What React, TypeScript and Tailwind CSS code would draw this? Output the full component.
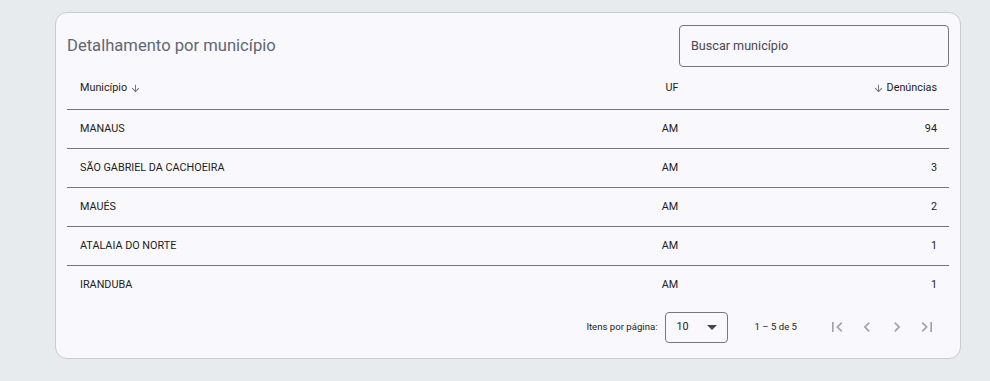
import React from "react";

type Row = { nome: string; uf: string; total: number };

const rows: Row[] = [
  { nome: "MANAUS", uf: "AM", total: 94 },
  { nome: "SÃO GABRIEL DA CACHOEIRA", uf: "AM", total: 3 },
  { nome: "MAUÉS", uf: "AM", total: 2 },
  { nome: "ATALAIA DO NORTE", uf: "AM", total: 1 },
  { nome: "IRANDUBA", uf: "AM", total: 1 },
];

function ArrowDown({ className = "" }: { className?: string }) {
  return (
    <svg viewBox="0 0 24 24" className={className} fill="currentColor">
      <path d="M20 12l-1.41-1.41L13 16.17V4h-2v12.17l-5.58-5.59L4 12l8 8 8-8z" />
    </svg>
  );
}

function FirstPage() {
  return (
    <svg viewBox="0 0 24 24" className="w-[20px] h-[20px]" fill="currentColor">
      <path d="M18.41 16.59L13.82 12l4.59-4.59L17 6l-6 6 6 6zM6 6h2v12H6z" />
    </svg>
  );
}
function PrevPage() {
  return (
    <svg viewBox="0 0 24 24" className="w-[20px] h-[20px]" fill="currentColor">
      <path d="M15.41 7.41L14 6l-6 6 6 6 1.41-1.41L10.83 12z" />
    </svg>
  );
}
function NextPage() {
  return (
    <svg viewBox="0 0 24 24" className="w-[20px] h-[20px]" fill="currentColor">
      <path d="M10 6L8.59 7.41 13.17 12l-4.58 4.59L10 18l6-6z" />
    </svg>
  );
}
function LastPage() {
  return (
    <svg viewBox="0 0 24 24" className="w-[20px] h-[20px]" fill="currentColor">
      <path d="M5.59 7.41L10.18 12l-4.59 4.59L7 18l6-6-6-6zM16 6h2v12h-2z" />
    </svg>
  );
}

export default function App() {
  return (
    <div
      className="w-[990px] h-[381px] bg-[#e8ebee] pt-[12px] pl-[55px]"
      style={{ fontFamily: "Roboto, 'Liberation Sans', sans-serif" }}
    >
      <div className="w-[906px] h-[347px] bg-[#f9f9fd] border border-[#c9cacf] rounded-[12px] px-[11px] pt-[12px]">
        {/* title + search */}
        <div className="flex items-center justify-between">
          <h2 className="text-[16.6px] text-[#5f6672] leading-[24px]">
            Detalhamento por município
          </h2>
          <div className="w-[270px] h-[42px] border border-[#79747e] rounded-[4px] flex items-center px-[11px]">
            <span className="text-[12.6px] text-[#49454f]">Buscar município</span>
          </div>
        </div>

        {/* table */}
        <div className="text-[10.8px] text-[#1d1b20]">
          <div className="grid grid-cols-[545px_120px_1fr] h-[43px] items-center border-b border-[#79747e]">
            <div className="pl-[13px] flex items-center gap-[3px]">
              <span>Município</span>
              <ArrowDown className="w-[11px] h-[11px] text-[#6b6b70]" />
            </div>
            <div className="text-center">UF</div>
            <div className="pr-[12px] flex items-center justify-end gap-[3px]">
              <ArrowDown className="w-[11px] h-[11px] text-[#6b6b70]" />
              <span>Denúncias</span>
            </div>
          </div>
          {rows.map((r, i) => (
            <div
              key={r.nome}
              className={
                "grid grid-cols-[545px_120px_1fr] h-[39px] items-center " +
                (i < rows.length - 1 ? "border-b border-[#79747e]" : "")
              }
            >
              <div className="pl-[13px]">{r.nome}</div>
              <div className="text-center pr-[4px]">{r.uf}</div>
              <div className="text-right pr-[12px]">{r.total}</div>
            </div>
          ))}
        </div>

        {/* paginator */}
        <div className="flex items-center justify-end h-[44px] text-[9.6px] text-[#1d1b20]">
          <span className="mr-[7px]">Itens por página:</span>
          <div className="w-[63px] h-[31px] border border-[#79747e] rounded-[4px] flex items-center justify-between pl-[11px] pr-[10px]">
            <span className="text-[10.8px]">10</span>
            <svg viewBox="0 0 10 5" className="w-[10px] h-[5px]" fill="#49454f">
              <path d="M0 0l5 5 5-5z" />
            </svg>
          </div>
          <span className="ml-[27px] mr-[30px]">1 – 5 de 5</span>
          <div className="flex items-center gap-[10px] text-[#a3a2a8] mr-[12px]">
            <FirstPage />
            <PrevPage />
            <NextPage />
            <LastPage />
          </div>
        </div>
      </div>
    </div>
  );
}
